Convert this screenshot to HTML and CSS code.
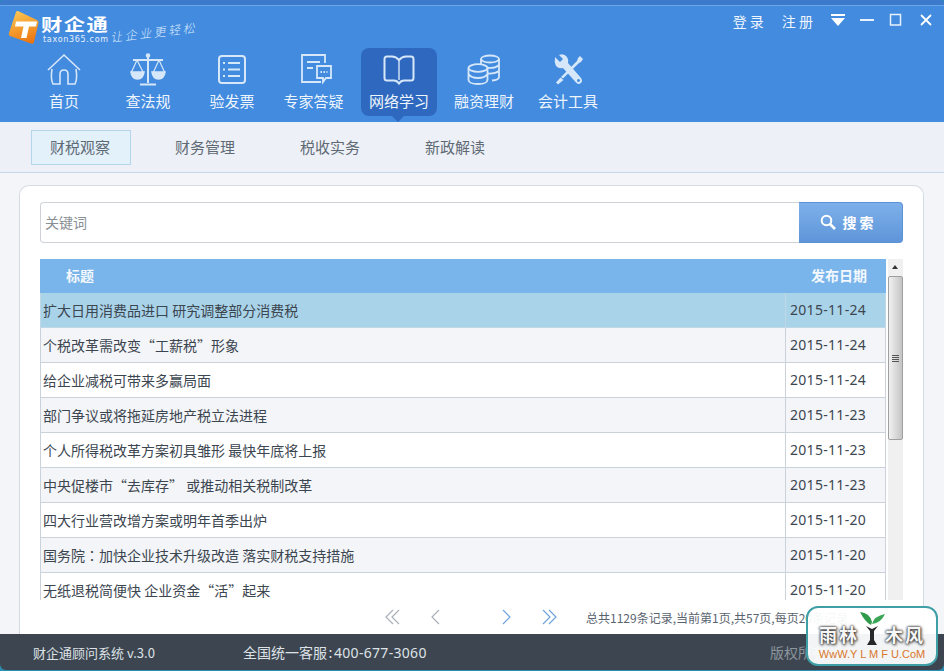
FILE: index.html
```html
<!DOCTYPE html>
<html lang="zh-CN">

<head>
  <meta charset="UTF-8">
  <title>财企通</title>
  <link rel="stylesheet" href="styles.css">
</head>

<body>
  <div class="window">

    <!-- Header -->
    <div class="header">
      <div class="top-row">
        <div class="logo">
          <svg class="logo-mark" width="32" height="36" viewBox="0 0 32 36">
            <defs>
              <linearGradient id="logoFill" x1="0.300" y1="0" x2="0.600" y2="1">
                <stop offset="0" stop-color="#fbc650"/>
                <stop offset="1" stop-color="#ec7410"/>
              </linearGradient>
            </defs>
            <path d="M10 1 L29 10 Q31 11 30.500 13 L26 32 Q25.500 34.500 23 33.500 L2 26 Q0 25 1 23 L8 2 Q8.500 0.500 10 1 Z" fill="url(#logoFill)"/>
            <path d="M8 11.500 H29 L28 16.500 H21 L18.500 28 H13 L15.500 16.500 H7 Z" fill="#fff"/>
          </svg>
          <div class="logo-text">
            <div class="logo-name">财企通</div>
            <div class="logo-url">taxon365.com</div>
          </div>
          <div class="slogan">让企业更轻松</div>
        </div>
        <div class="win-tools">
          <a class="win-link">登 录</a>
          <a class="win-link">注 册</a>
          <svg class="win-icon" width="16" height="14" viewBox="0 0 16 14"><rect x="1" y="1" width="14" height="2" fill="#fff"/><path d="M1 5 H15 L8 13 Z" fill="#fff"/></svg>
          <svg class="win-icon icon-min" width="16" height="14" viewBox="0 0 16 14"><rect x="1" y="6" width="14" height="2" fill="#e8f2fd"/></svg>
          <svg class="win-icon icon-max" width="14" height="14" viewBox="0 0 14 14"><rect x="1.500" y="1.500" width="10" height="10.500" fill="none" stroke="#e8f2fd" stroke-width="1.500"/></svg>
          <svg class="win-icon icon-close" width="14" height="14" viewBox="0 0 14 14"><path d="M2 2 L12 12 M12 2 L2 12" stroke="#fff" stroke-width="1.800"/></svg>
        </div>
      </div>

      <div class="nav">
        <div class="nav-item">
          <svg width="36" height="34" viewBox="0 0 36 34" fill="none" stroke="#d6e7fa" stroke-width="1.600">
            <path d="M2 17 L18 2 L34 17"/>
            <path d="M6 16 C5 22 5 27 7 31 H14 V21 Q14 17 18 17 Q22 17 22 21 V31 H29 C31 27 31 22 30 16"/>
          </svg>
          <span>首页</span>
        </div>
        <div class="nav-item">
          <svg width="36" height="34" viewBox="0 0 36 34" fill="none" stroke="#d6e7fa" stroke-width="1.600">
            <circle cx="18" cy="2.500" r="1.500" fill="#d6e7fa"/>
            <path d="M18 3 V30 M10 31.500 H26 M3 7 H33" stroke-width="2"/>
            <path d="M7 7 L1.500 19 M7 7 L13 19 M29 7 L23.500 19 M29 7 L34.500 19" stroke-width="1.200"/>
            <path d="M1 19 H14 Q13 26 7.500 26 Q2 26 1 19 Z M22 19 H35 Q34 26 28.500 26 Q23 26 22 19 Z" fill="#d6e7fa"/>
          </svg>
          <span>查法规</span>
        </div>
        <div class="nav-item">
          <svg width="36" height="34" viewBox="0 0 36 34" fill="none" stroke="#d6e7fa" stroke-width="2">
            <rect x="5" y="3" width="26" height="27" rx="3"/>
            <path d="M14 10 H26 M14 16.500 H26 M14 23 H26"/>
            <path d="M9 10 H11 M9 16.500 H11 M9 23 H11"/>
          </svg>
          <span>验发票</span>
        </div>
        <div class="nav-item">
          <svg width="36" height="34" viewBox="0 0 36 34" fill="none" stroke="#d6e7fa" stroke-width="1.800">
            <path d="M23 29 H4 V2 H27 V10"/>
            <path d="M9 9 H22 M9 15 H15"/>
            <path d="M19 13 H33 V25 H28 L25 29 V25 H19 Z"/>
            <path d="M22.500 19 H29.500" stroke-dasharray="1.500 1.500"/>
          </svg>
          <span>专家答疑</span>
        </div>
        <div class="nav-item active">
          <svg width="36" height="34" viewBox="0 0 36 34" fill="none" stroke="#d6e7fa" stroke-width="2">
            <path d="M18 7 Q15 3.500 11 3.500 H6 Q3.500 3.500 3.500 6 V25 Q3.500 27.500 6 27.500 H13 Q16 27.500 18 30.500 Q20 27.500 23 27.500 H30 Q32.500 27.500 32.500 25 V6 Q32.500 3.500 30 3.500 H25 Q21 3.500 18 7 Z"/>
            <path d="M18 7 V27" stroke-width="1.400"/>
          </svg>
          <span>网络学习</span>
        </div>
        <div class="nav-item">
          <svg width="36" height="34" viewBox="0 0 36 34" fill="none" stroke="#d6e7fa" stroke-width="1.800">
            <ellipse cx="24" cy="6" rx="9" ry="3.500"/>
            <path d="M15 6 V13 M33 6 V24 Q33 27 26 27.500 M15 12 Q18 15 24 14.800 Q30 15 33 12 M22 20.500 Q29 21 33 18"/>
            <ellipse cx="12" cy="15" rx="9.500" ry="3.800" fill="#428bdf"/>
            <path d="M2.500 15 V27 Q3 31 12 31 Q21 31 21.500 27 V15 M2.500 21 Q5 25 12 25 Q19 25 21.500 21"/>
          </svg>
          <span>融资理财</span>
        </div>
        <div class="nav-item">
          <svg width="36" height="34" viewBox="0 0 36 34" fill="#d6e7fa">
            <path d="M5 4 L10 9 L13 6 L9 2 Q14 0 17 4 Q19 7 18 10 L31 25 Q33 28 31 30 Q28 32 26 29.500 L13 15 Q9 16 6 13 Q4 9 5 4 Z M28.500 26 a1.500 1.500 0 1 0 .01 0 Z" fill-rule="evenodd"/>
            <path d="M30 3 L33 6 L31 9 L29 10 L13 25.500 L11 24 L27 8 L28 5 Z"/>
            <path d="M10.500 24.500 L13.500 27 L8 31.500 L6 29.500 Z"/>
          </svg>
          <span>会计工具</span>
        </div>
      </div>
    </div>

    <!-- Sub tabs -->
    <div class="tabs">
      <div class="tab active">财税观察</div>
      <div class="tab">财务管理</div>
      <div class="tab">税收实务</div>
      <div class="tab">新政解读</div>
    </div>

    <!-- Content -->
    <div class="content">
      <div class="card">
        <div class="search">
          <input class="search-input" type="text" placeholder="关键词">
          <button class="search-btn">
            <svg width="16" height="16" viewBox="0 0 16 16" fill="none" stroke="#fff" stroke-width="2"><circle cx="6.500" cy="6.500" r="4.800"/><path d="M10 10 L15 15" stroke-width="2.600"/></svg>
            <span>搜 索</span>
          </button>
        </div>

        <div class="list">
          <div class="list-body">
            <table class="news">
              <thead>
                <tr><th class="col-title">标题</th><th class="col-date">发布日期</th></tr>
              </thead>
              <tbody>
                <tr class="selected"><td>扩大日用消费品进口 研究调整部分消费税</td><td class="date">2015-11-24</td></tr>
                <tr class="alt"><td>个税改革需改变“工薪税”形象</td><td class="date">2015-11-24</td></tr>
                <tr><td>给企业减税可带来多赢局面</td><td class="date">2015-11-24</td></tr>
                <tr class="alt"><td>部门争议或将拖延房地产税立法进程</td><td class="date">2015-11-23</td></tr>
                <tr><td>个人所得税改革方案初具雏形 最快年底将上报</td><td class="date">2015-11-23</td></tr>
                <tr class="alt"><td>中央促楼市“去库存” 或推动相关税制改革</td><td class="date">2015-11-23</td></tr>
                <tr><td>四大行业营改增方案或明年首季出炉</td><td class="date">2015-11-20</td></tr>
                <tr class="alt"><td>国务院<span class="colon" lang="zh-TW">：</span>加快企业技术升级改造 落实财税支持措施</td><td class="date">2015-11-20</td></tr>
                <tr><td>无纸退税简便快 企业资金“活”起来</td><td class="date">2015-11-20</td></tr>
              </tbody>
            </table>
          </div>
          <div class="scrollbar">
            <div class="scroll-up"></div>
            <div class="scroll-thumb"><div class="scroll-grip"></div></div>
          </div>
        </div>

        <div class="pager">
          <div class="pager-btns">
            <svg width="18" height="18" viewBox="0 0 18 18" fill="none" stroke="#a9b0b8" stroke-width="1.200"><path d="M9 2 L2 9 L9 16 M15 2 L8 9 L15 16"/></svg>
            <svg class="pager-prev" width="12" height="18" viewBox="0 0 12 18" fill="none" stroke="#a9b0b8" stroke-width="1.200"><path d="M10 2 L3 9 L10 16"/></svg>
            <svg class="pager-next" width="12" height="18" viewBox="0 0 12 18" fill="none" stroke="#6ea3dc" stroke-width="1.200"><path d="M2 2 L9 9 L2 16"/></svg>
            <svg width="18" height="18" viewBox="0 0 18 18" fill="none" stroke="#6ea3dc" stroke-width="1.200"><path d="M3 2 L10 9 L3 16 M9 2 L16 9 L9 16"/></svg>
          </div>
          <div class="pager-info">总共1129条记录,当前第1页,共57页,每页20条记录</div>
        </div>
      </div>
    </div>

    <!-- Footer -->
    <div class="footer">
      <div class="version">财企通顾问系统 v.3.0</div>
      <div class="hotline">全国统一客服<span class="hotline-colon">:</span><span class="hotline-num">400-677-3060</span></div>
      <div class="copyright">版权所有</div>
    </div>

    <!-- Watermark badge -->
    <div class="badge">
      <div class="badge-name">
        <span>雨林</span>
        <svg width="26" height="36" viewBox="0 0 26 36">
          <path d="M12 14 Q6 11 1 1 Q11 2 13 11 Z" fill="#2f9a4a"/>
          <path d="M13 13 Q15 5 26 3 Q22 12 13 13 Z" fill="#3aa655"/>
          <path d="M7 15 L11 20 V29 L8 34 H18 L15 29 V20 L19 15 L13 18 Z" fill="#26282a"/>
        </svg>
        <span>木风</span>
      </div>
      <div class="badge-url">WwW.Y L M F U.CoM</div>
    </div>

  </div>
</body>

</html>
```

FILE: styles.css
```css
html, body {
  margin: 0;
  padding: 0;
}

body {
  font-family: "Noto Sans CJK SC", "Noto Sans", sans-serif;
  font-size: 14px;
  color: #3c4650;
}

.window {
  position: relative;
  width: 944px;
  height: 671px;
  display: flex;
  flex-direction: column;
  overflow: hidden;
  background: #2a8fb5;
}

/* Header */
.header {
  height: 122px;
  box-sizing: border-box;
  flex: none;
  background: #428bdf;
  border-top: 5px solid #3c7acb;
  border-radius: 3px 3px 0 0;
  box-shadow: inset 0 1px 0 #6ca7e9;
}

.top-row {
  height: 43px;
  display: flex;
  justify-content: space-between;
}

.logo {
  display: flex;
  align-items: flex-start;
  padding: 5px 0 0 8px;
}

.logo-text {
  width: 68px;
  margin: 4px 0 0 1px;
  color: #fff;
}

/* the logo lettering is wider than it is tall */
.logo-name {
  font-size: 17px;
  font-weight: 700;
  line-height: 20px;
  letter-spacing: 1.200px;
  white-space: nowrap;
  transform: scaleX(1.250);
  transform-origin: left center;
}

.logo-url {
  margin: 2px 0 0 2px;
  font-family: "DejaVu Sans", sans-serif;
  font-size: 8px;
  line-height: 8px;
  letter-spacing: .7px;
  white-space: nowrap;
  color: #e6f0fb;
}

.slogan {
  margin: 14px 0 0 1px;
  font-size: 12px;
  line-height: 16px;
  font-style: italic;
  font-weight: 300;
  letter-spacing: 2.500px;
  color: #d9e9fb;
  transform: rotate(-6.500deg);
}

.win-tools {
  display: flex;
  align-items: flex-start;
  padding: 6px 11px 0 0;
}

.win-link {
  margin-right: 18px;
  font-size: 14px;
  line-height: 20px;
  color: #f0f6fd;
}

.win-link + .win-icon {
  margin-left: -1px;
}

.win-icon {
  margin-top: 2px;
}

.icon-min {
  margin-left: 13px;
}

.icon-max {
  margin-left: 14px;
}

.icon-close {
  margin-left: 16px;
}

/* Main nav */
.nav {
  display: flex;
  gap: 8px;
  padding-left: 26px;
}

.nav-item {
  position: relative;
  width: 76px;
  height: 68px;
  display: flex;
  flex-direction: column;
  align-items: center;
  box-sizing: border-box;
  padding-top: 5px;
  font-size: 15px;
  color: #eef5fd;
  border-radius: 8px;
}

.nav-item span {
  margin-top: 4px;
  line-height: 20px;
  white-space: nowrap;
}

.nav-item:nth-child(4) span {
  margin-right: 5px;
}

.nav-item.active {
  margin: 0 1px 0 -1px;
  background: #2f69bf;
}

.nav-item.active::after {
  content: "";
  position: absolute;
  left: 31px;
  bottom: -6px;
  border: 6px solid transparent;
  border-bottom: 0;
  border-top-color: #2f69bf;
}

/* Sub tabs */
.tabs {
  height: 51px;
  box-sizing: border-box;
  flex: none;
  display: flex;
  gap: 25px;
  padding: 8px 0 0 31px;
  background: #edf1f7;
  border-bottom: 1px solid #c4d7ec;
}

.tab {
  width: 100px;
  height: 35px;
  box-sizing: border-box;
  padding-right: 2px;
  font-size: 15px;
  line-height: 31px;
  text-align: center;
  color: #5f6a75;
  border: 1px solid transparent;
}

.tab.active {
  background: #e3f1fb;
  border-color: #b5d6ea;
}

/* Content */
.content {
  flex: 1;
  min-height: 0;
  padding: 12px 20px 0 19px;
  background: #f3f5f9;
}

.card {
  height: 100%;
  box-sizing: border-box;
  padding: 16px 20px 0 20px;
  background: #fff;
  border: 1px solid #d5dbe2;
  border-bottom: 0;
  border-radius: 10px 10px 0 0;
}

/* Search */
.search {
  display: flex;
  height: 41px;
}

.search-input {
  flex: 1;
  min-width: 0;
  box-sizing: border-box;
  padding: 0 4px 2px;
  font-family: inherit;
  font-size: 14px;
  border: 1px solid #cfd3d8;
  border-right: 0;
  border-radius: 4px 0 0 4px;
  outline: none;
}

.search-input::placeholder {
  color: #8a8f95;
}

.search-btn {
  width: 104px;
  display: flex;
  align-items: center;
  justify-content: center;
  gap: 6px;
  padding: 0 7px 2px 0;
  font-family: inherit;
  font-size: 14px;
  font-weight: 700;
  color: #fff;
  background: linear-gradient(#7db0ea, #5f95d9);
  border: 1px solid #5b92d6;
  border-left: 0;
  border-radius: 0 4px 4px 0;
}

/* List */
.list {
  display: flex;
  justify-content: space-between;
  height: 341px;
  margin-top: 16px;
}

.list-body {
  width: 846px;
  overflow: hidden;
}

.news {
  width: 846px;
  table-layout: fixed;
  border-collapse: collapse;
}

.news th {
  height: 32px;
  padding: 0 0 2px;
  font-size: 14px;
  font-weight: 700;
  color: #f3f8fe;
  background: #79b4ea;
  border: 0 solid #79b4ea;
  border-width: 0 1px;
}

.news th.col-title {
  padding-left: 25px;
  text-align: left;
}

.news th.col-date {
  width: 81px;
  padding-right: 18px;
  text-align: right;
}

.news td {
  height: 34px;
  padding: 0 0 0 2px;
  line-height: 34px;
  white-space: nowrap;
  color: #3c4650;
  border: 1px solid #ccd2d9;
  border-top: 0;
}

.news td.date {
  padding: 0 0 0 4px;
  font-family: "Noto Sans", sans-serif;
  letter-spacing: .3px;
}

.news .colon {
  font-family: "Noto Sans CJK TC", sans-serif;
}

.news tr.alt td {
  background: #f3f5f8;
}

.news tr.selected td {
  background: #a9d3e8;
  border-color: #c0d8e6;
}

.scrollbar {
  width: 15px;
  background: #f0f0f0;
}

.scroll-up {
  height: 17px;
  position: relative;
}

.scroll-up::after {
  content: "";
  position: absolute;
  left: 4px;
  top: 6px;
  border: 3.500px solid transparent;
  border-top: 0;
  border-bottom: 4px solid #333;
}

.scroll-thumb {
  height: 164px;
  display: flex;
  align-items: center;
  justify-content: center;
  box-sizing: border-box;
  background: linear-gradient(90deg, #f1f1f1, #c4c4c4);
  border: 1px solid #9f9f9f;
  border-radius: 2px;
}

.scroll-grip {
  width: 7px;
  height: 7px;
  background: repeating-linear-gradient(#555 0, #555 1px, transparent 1px, transparent 2px);
}

/* Pager */
.pager {
  display: flex;
  align-items: center;
  height: 34px;
}

.pager-btns {
  display: flex;
  align-items: center;
  margin-left: 344px;
}

.pager-prev {
  margin-left: 27px;
}

.pager-next {
  margin-left: 60px;
}

.pager-next + svg {
  margin-left: 27px;
}

.pager-info {
  margin-left: 28px;
  font-size: 12px;
  white-space: nowrap;
  color: #5a6470;
}

/* Footer */
.footer {
  height: 36px;
  margin-bottom: 1px;
  flex: none;
  display: flex;
  align-items: center;
  box-sizing: border-box;
  padding-left: 33px;
  font-size: 13px;
  color: #dde2e7;
  background: #3d4650;
  border-radius: 0 0 6px 6px;
}

.version {
  width: 210px;
}

.hotline {
  width: 527px;
  font-size: 14px;
}

.hotline-colon {
  display: inline-block;
  width: 7px;
  text-align: center;
}

.hotline-num {
  font-family: "Noto Sans", sans-serif;
  letter-spacing: .3px;
}

.copyright {
  color: #8d959d;
  font-size: 14px;
}

/* Watermark badge */
.badge {
  position: absolute;
  left: 806px;
  top: 606px;
  width: 132px;
  height: 60px;
  box-sizing: border-box;
  background: rgba(255, 255, 255, .94);
  border: 2px solid #3f9fa6;
  border-radius: 12px;
}

.badge-name {
  display: flex;
  justify-content: center;
  align-items: flex-end;
  height: 37px;
  font-size: 18px;
  font-weight: 700;
  line-height: 22px;
  letter-spacing: 2px;
  color: #f6f6f6;
  text-shadow: 0 0 2px #333, 0 0 3px #444, 1px 1px 3px #555;
}

.badge-name svg {
  margin: 0 0 -2px;
}

.badge-url {
  margin-top: 3px;
  font-family: "Liberation Sans", sans-serif;
  font-size: 11px;
  line-height: 13px;
  text-align: center;
  color: #d9772c;
}
```
